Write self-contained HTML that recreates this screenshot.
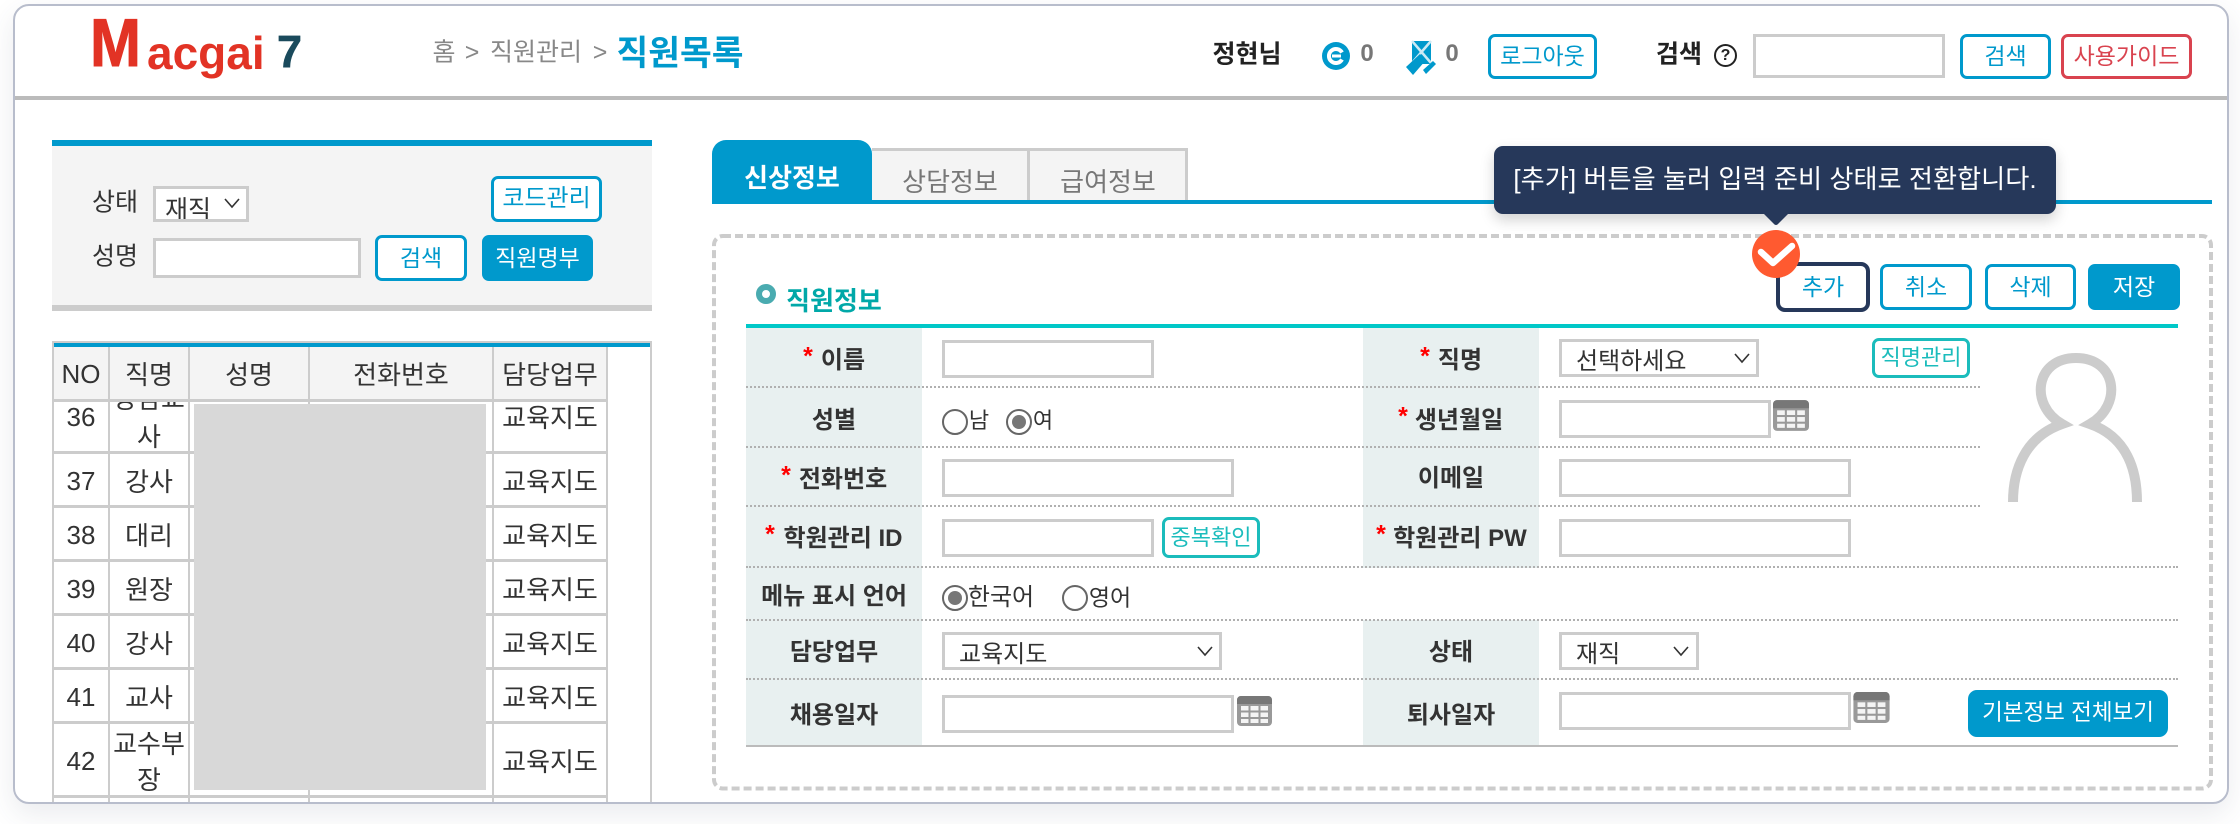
<!DOCTYPE html>
<html lang="ko"><head><meta charset="utf-8"><title>직원목록</title>
<style>
*{box-sizing:border-box;margin:0;padding:0}
html,body{width:2240px;height:824px;background:#fff;overflow:hidden;font-family:"Liberation Sans","Noto Sans CJK KR",sans-serif;color:#333}
.a{position:absolute}
.t{position:absolute;transform:translate(-50%,-50%);white-space:nowrap;line-height:1;margin-top:1px}
.l{font-size:24px;font-weight:700;color:#333}
.s{position:absolute;transform:translate(-50%,-50%);color:#f00;font:700 25px "Liberation Sans",sans-serif;line-height:1;margin-top:1px}
.b{font-size:26px;color:#333}
.i{position:absolute;border:3px solid #ccc;background:#fff;height:38px;display:block}
select.i{appearance:none;-webkit-appearance:none;font:24px "Liberation Sans","Noto Sans CJK KR",sans-serif;color:#333;padding:6px 0 0 14px;border-radius:0}
.btn{position:absolute;border:3px solid #0099cc;border-radius:7px;background:#fff;color:#0099cc;font-size:23px;display:flex;align-items:center;justify-content:center;white-space:nowrap;line-height:1}
.f{background:#0099cc;color:#fff}
.tl{border-color:#1bbcbc;color:#1bbcbc;font-size:22px}
.h{position:absolute;background:#ccc}
.d{position:absolute;height:0;border-top:2px dotted #b0b0b0}
.lb{position:absolute;background:#e8f0f0;width:176px}
.r{position:absolute;width:26px;height:26px;border-radius:50%;border:2px solid #666;background:#fff}
.r.on:after{content:"";position:absolute;left:4px;top:4px;width:14px;height:14px;border-radius:50%;background:#777}
#frame{position:absolute;left:13px;top:4px;width:2216px;height:800px;border:2px solid #b8bdcc;border-radius:16px;box-shadow:0 10px 28px rgba(60,70,100,.11)}
</style></head><body>

<!-- clipped page content inside the frame -->
<div class="a" style="left:0;top:0;width:2240px;height:802px;overflow:hidden">

<div class="a" style="left:14px;top:96px;width:2214px;height:4px;background:#bbb"></div>

<!-- logo -->
<div class="a" style="left:90px;top:4px;font:700 68px 'Liberation Sans',sans-serif;color:#e23325;transform:scaleX(.9);transform-origin:0 0;line-height:78px;-webkit-text-stroke:1px #e23325">M</div>
<div class="a" style="left:147px;top:27px;font:700 46px 'Liberation Sans',sans-serif;color:#e23325;line-height:52px">acgai</div>
<div class="a" style="left:277px;top:26px;font:700 45px 'Liberation Sans',sans-serif;color:#1a4a5c;line-height:52px;-webkit-text-stroke:.6px #1a4a5c">7</div>

<!-- breadcrumb -->
<div class="t" style="left:444px;top:52px;font-size:25px;color:#888">홈</div>
<div class="t" style="left:472px;top:52px;font-size:25px;color:#888">&gt;</div>
<div class="t" style="left:536px;top:52px;font-size:25px;color:#888">직원관리</div>
<div class="t" style="left:600px;top:52px;font-size:25px;color:#888">&gt;</div>
<div class="t" style="left:680px;top:53px;font-size:34.500px;font-weight:700;color:#0099cc">직원목록</div>

<!-- header right -->
<div class="t" style="left:1247px;top:54px;font-size:25px;font-weight:700;color:#222">정현님</div>
<svg class="a" style="left:1322px;top:42px" width="28" height="28" viewBox="0 0 28 28"><circle cx="14" cy="14" r="14" fill="#0099cc"/><path d="M20 10.500A7 7 0 1 0 20 17.500" fill="none" stroke="#fff" stroke-width="4"/><path d="M10 14h9" stroke="#fff" stroke-width="3"/></svg>
<div class="t" style="left:1367px;top:53px;font:700 24px 'Liberation Sans',sans-serif;color:#777">0</div>
<svg class="a" style="left:1406px;top:40px" width="30" height="36" viewBox="0 0 30 36"><path d="M6 1h19v23H6z" fill="#0099cc"/><path d="M6 1l19 22M25 1L6 23" stroke="#cdeaf5" stroke-width="2.500"/><path d="M0 27L14 14l6 6L7 35z" fill="#0099cc"/><path d="M17 30l10-9 3 3-10 10z" fill="#0099cc"/></svg>
<div class="t" style="left:1452px;top:53px;font:700 24px 'Liberation Sans',sans-serif;color:#777">0</div>
<div class="btn" style="left:1488px;top:34px;width:109px;height:45px">로그아웃</div>
<div class="t" style="left:1679px;top:54px;font-size:25px;font-weight:700;color:#222">검색</div>
<div class="a" style="left:1714px;top:44px;width:23px;height:23px;border:2px solid #222;border-radius:50%;font:700 16px/19px 'Liberation Sans',sans-serif;text-align:center;color:#222">?</div>
<div class="i" style="left:1753px;top:34px;width:192px;height:44px"></div>
<div class="btn" style="left:1960px;top:34px;width:91px;height:45px">검색</div>
<div class="btn" style="left:2061px;top:34px;width:131px;height:45px;border-color:#d9434f;color:#d9434f">사용가이드</div>

<!-- left search panel -->
<div class="a" style="left:52px;top:140px;width:600px;height:171px;background:#f4f4f4;border-top:6px solid #0099cc;border-bottom:6px solid #ccc"></div>
<div class="t" style="left:115px;top:202px;font-size:25px">상태</div>
<div class="i" style="left:153px;top:186px;width:96px;height:36px;overflow:hidden"><span class="a" style="left:9px;top:6px;font-size:25px;line-height:30px;white-space:nowrap">재직</span></div>
<svg class="a" style="left:224px;top:198px" width="16" height="11" viewBox="0 0 16 11"><path d="M1 1l7 8 7-8" fill="none" stroke="#333" stroke-width="1.600"/></svg>
<div class="btn" style="left:491px;top:176px;width:111px;height:46px;font-size:24px">코드관리</div>
<div class="t" style="left:115px;top:256px;font-size:25px">성명</div>
<div class="i" style="left:153px;top:238px;width:208px;height:40px"></div>
<div class="btn" style="left:375px;top:235px;width:92px;height:46px">검색</div>
<div class="btn f" style="left:482px;top:235px;width:111px;height:46px">직원명부</div>

<!-- left table -->
<div class="h" style="left:52px;top:341px;width:600px;height:6px;background:#0099cc;border-top:2px solid #ccc"></div>
<div class="a" style="left:54px;top:347px;width:554px;height:53px;background:#f4f4f4"></div>
<div class="h" style="left:52px;top:341px;width:2px;height:470px"></div>
<div class="h" style="left:650px;top:341px;width:2px;height:470px"></div>
<div class="h" style="left:108px;top:347px;width:2px;height:470px"></div>
<div class="h" style="left:188px;top:347px;width:2px;height:470px"></div>
<div class="h" style="left:308px;top:347px;width:2px;height:470px"></div>
<div class="h" style="left:492px;top:347px;width:2px;height:470px"></div>
<div class="h" style="left:606px;top:347px;width:2px;height:470px"></div>
<div class="h" style="left:54px;top:399px;width:554px;height:3px"></div>
<div class="h" style="left:54px;top:451px;width:554px;height:3px"></div>
<div class="h" style="left:54px;top:505px;width:554px;height:3px"></div>
<div class="h" style="left:54px;top:559px;width:554px;height:3px"></div>
<div class="h" style="left:54px;top:613px;width:554px;height:3px"></div>
<div class="h" style="left:54px;top:667px;width:554px;height:3px"></div>
<div class="h" style="left:54px;top:721px;width:554px;height:3px"></div>
<div class="h" style="left:54px;top:795px;width:554px;height:3px"></div>

<div class="t b" style="left:81px;top:373px">NO</div>
<div class="t b" style="left:149px;top:374px">직명</div>
<div class="t b" style="left:249px;top:374px">성명</div>
<div class="t b" style="left:401px;top:374px">전화번호</div>
<div class="t b" style="left:550px;top:374px">담당업무</div>

<div class="a" style="left:110px;top:402px;width:78px;height:49px;overflow:hidden"><span class="t b" style="left:39px;top:-4px">상담교</span><span class="t b" style="left:39px;top:34px">사</span></div>
<div class="t b" style="left:81px;top:416px">36</div><div class="t b" style="left:550px;top:417px">교육지도</div>
<div class="t b" style="left:81px;top:480px">37</div><div class="t b" style="left:149px;top:481px">강사</div><div class="t b" style="left:550px;top:481px">교육지도</div>
<div class="t b" style="left:81px;top:534px">38</div><div class="t b" style="left:149px;top:535px">대리</div><div class="t b" style="left:550px;top:535px">교육지도</div>
<div class="t b" style="left:81px;top:588px">39</div><div class="t b" style="left:149px;top:589px">원장</div><div class="t b" style="left:550px;top:589px">교육지도</div>
<div class="t b" style="left:81px;top:642px">40</div><div class="t b" style="left:149px;top:643px">강사</div><div class="t b" style="left:550px;top:643px">교육지도</div>
<div class="t b" style="left:81px;top:696px">41</div><div class="t b" style="left:149px;top:697px">교사</div><div class="t b" style="left:550px;top:697px">교육지도</div>
<div class="t b" style="left:81px;top:760px">42</div><div class="t b" style="left:149px;top:743px">교수부</div><div class="t b" style="left:149px;top:779px">장</div><div class="t b" style="left:550px;top:761px">교육지도</div>
<div class="a" style="left:194px;top:404px;width:292px;height:386px;background:#d8d8d8"></div>

<!-- tabs -->
<div class="a" style="left:712px;top:200px;width:1500px;height:4px;background:#0099cc"></div>
<div class="a" style="left:712px;top:140px;width:160px;height:64px;background:#0099cc;border-radius:14px 14px 0 0"></div>
<div class="t" style="left:792px;top:177px;font-size:26px;font-weight:700;color:#fff">신상정보</div>
<div class="a" style="left:872px;top:148px;width:158px;height:52px;background:#f4f4f4;border:3px solid #ccc;border-left:0;border-bottom:0"></div>
<div class="a" style="left:1030px;top:148px;width:158px;height:52px;background:#f4f4f4;border:3px solid #ccc;border-left:0;border-bottom:0"></div>
<div class="t" style="left:950px;top:181px;font-size:26px;color:#777">상담정보</div>
<div class="t" style="left:1108px;top:181px;font-size:26px;color:#777">급여정보</div>

<!-- dashed box -->
<svg class="a" style="left:710px;top:232px" width="1504" height="560" viewBox="710 232 1504 560"><rect x="714" y="236" width="1497" height="552.500" rx="9" fill="none" stroke="#ccc" stroke-width="4" stroke-dasharray="8 4"/></svg>

<div class="a" style="left:756px;top:284px;width:20px;height:20px;border-radius:50%;border:6px solid #4aabb0;background:#fff"></div>
<div class="t" style="left:834px;top:300px;font-size:26px;font-weight:700;color:#00a8a8">직원정보</div>

<!-- buttons -->
<div class="btn" style="left:1776px;top:262px;width:94px;height:50px;border:4px solid #26385a;border-radius:9px;padding-top:1px">추가</div>
<div class="btn" style="left:1880px;top:264px;width:92px;height:46px">취소</div>
<div class="btn" style="left:1985px;top:264px;width:91px;height:46px">삭제</div>
<div class="btn f" style="left:2088px;top:264px;width:92px;height:46px">저장</div>

<!-- form table -->
<div class="a" style="left:746px;top:324px;width:1432px;height:4px;background:#00c8c8"></div>
<div class="lb" style="left:746px;top:328px;height:417px"></div>
<div class="lb" style="left:1363px;top:328px;height:292px"></div>
<div class="lb" style="left:1363px;top:620px;height:125px"></div>
<div class="a" style="left:1363px;top:568px;width:176px;height:52px;background:#fff"></div>
<div class="d" style="left:746px;top:386px;width:1234px"></div>
<div class="d" style="left:746px;top:446px;width:1234px"></div>
<div class="d" style="left:746px;top:505px;width:1234px"></div>
<div class="d" style="left:746px;top:566px;width:1432px"></div>
<div class="d" style="left:746px;top:619px;width:1432px"></div>
<div class="d" style="left:746px;top:678px;width:1432px"></div>
<div class="a" style="left:746px;top:745px;width:1432px;height:2px;background:#bbb"></div>

<!-- labels col 1 -->
<div class="s" style="left:808px;top:356px">*</div><div class="t l" style="left:843px;top:360px">이름</div>
<div class="t l" style="left:834px;top:420px">성별</div>
<div class="s" style="left:786px;top:475px">*</div><div class="t l" style="left:843px;top:479px">전화번호</div>
<div class="s" style="left:770px;top:534px">*</div><div class="t l" style="left:843px;top:538px">학원관리 ID</div>
<div class="t l" style="left:834px;top:596px">메뉴 표시 언어</div>
<div class="t l" style="left:834px;top:652px">담당업무</div>
<div class="t l" style="left:834px;top:715px">채용일자</div>

<!-- labels col 3 -->
<div class="s" style="left:1425px;top:356px">*</div><div class="t l" style="left:1460px;top:360px">직명</div>
<div class="s" style="left:1403px;top:416px">*</div><div class="t l" style="left:1459px;top:420px">생년월일</div>
<div class="t l" style="left:1451px;top:478px">이메일</div>
<div class="s" style="left:1381px;top:534px">*</div><div class="t l" style="left:1460px;top:538px">학원관리 PW</div>
<div class="t l" style="left:1451px;top:652px">상태</div>
<div class="t l" style="left:1451px;top:715px">퇴사일자</div>

<!-- fields col 2 -->
<input class="i" style="left:942px;top:340px;width:212px">
<div class="r" style="left:942px;top:409px"></div><div class="t" style="left:979px;top:420px;font-size:22px">남</div>
<div class="r on" style="left:1006px;top:409px"></div><div class="t" style="left:1043px;top:420px;font-size:22px">여</div>
<input class="i" style="left:942px;top:459px;width:292px">
<input class="i" style="left:942px;top:519px;width:212px">
<div class="btn tl" style="left:1162px;top:517px;width:98px;height:41px">중복확인</div>
<div class="r on" style="left:942px;top:585px"></div><div class="t" style="left:1001px;top:597px;font-size:24px">한국어</div>
<div class="r" style="left:1062px;top:585px"></div><div class="t" style="left:1110px;top:597px;font-size:23px">영어</div>
<select class="i" style="left:942px;top:632px;width:280px"><option>교육지도</option></select>
<svg class="a" style="left:1197px;top:646px" width="16" height="11" viewBox="0 0 16 11"><path d="M1 1l7 8 7-8" fill="none" stroke="#333" stroke-width="1.600"/></svg>
<input class="i" style="left:942px;top:695px;width:292px">
<svg class="a" style="left:1237px;top:696px" width="35" height="30" viewBox="0 0 35 30"><rect width="35" height="30" rx="4" fill="#999"/><path d="M0 8V4a4 4 0 0 1 4-4h27a4 4 0 0 1 4 4v4z" fill="#777"/><g fill="#f4f4f4"><rect x="4" y="10" width="7.500" height="4.500"/><rect x="13.500" y="10" width="8" height="4.500"/><rect x="23.500" y="10" width="7.500" height="4.500"/><rect x="4" y="16.500" width="7.500" height="4.500"/><rect x="13.500" y="16.500" width="8" height="4.500"/><rect x="23.500" y="16.500" width="7.500" height="4.500"/><rect x="4" y="23" width="7.500" height="4"/><rect x="13.500" y="23" width="8" height="4"/><rect x="23.500" y="23" width="7.500" height="4"/></g></svg>

<!-- fields col 4 -->
<select class="i" style="left:1559px;top:339px;width:200px"><option>선택하세요</option></select>
<svg class="a" style="left:1734px;top:353px" width="16" height="11" viewBox="0 0 16 11"><path d="M1 1l7 8 7-8" fill="none" stroke="#333" stroke-width="1.600"/></svg>
<div class="btn tl" style="left:1872px;top:338px;width:98px;height:40px">직명관리</div>
<input class="i" style="left:1559px;top:400px;width:212px">
<svg class="a" style="left:1773px;top:400px" width="36" height="31" viewBox="0 0 35 30"><rect width="35" height="30" rx="4" fill="#999"/><path d="M0 8V4a4 4 0 0 1 4-4h27a4 4 0 0 1 4 4v4z" fill="#777"/><g fill="#f4f4f4"><rect x="4" y="10" width="7.500" height="4.500"/><rect x="13.500" y="10" width="8" height="4.500"/><rect x="23.500" y="10" width="7.500" height="4.500"/><rect x="4" y="16.500" width="7.500" height="4.500"/><rect x="13.500" y="16.500" width="8" height="4.500"/><rect x="23.500" y="16.500" width="7.500" height="4.500"/><rect x="4" y="23" width="7.500" height="4"/><rect x="13.500" y="23" width="8" height="4"/><rect x="23.500" y="23" width="7.500" height="4"/></g></svg>
<input class="i" style="left:1559px;top:459px;width:292px">
<input class="i" style="left:1559px;top:519px;width:292px">
<select class="i" style="left:1559px;top:632px;width:140px"><option>재직</option></select>
<svg class="a" style="left:1673px;top:646px" width="16" height="11" viewBox="0 0 16 11"><path d="M1 1l7 8 7-8" fill="none" stroke="#333" stroke-width="1.600"/></svg>
<input class="i" style="left:1559px;top:692px;width:292px">
<svg class="a" style="left:1853px;top:692px" width="37" height="31" viewBox="0 0 35 30"><rect width="35" height="30" rx="4" fill="#999"/><path d="M0 8V4a4 4 0 0 1 4-4h27a4 4 0 0 1 4 4v4z" fill="#777"/><g fill="#f4f4f4"><rect x="4" y="10" width="7.500" height="4.500"/><rect x="13.500" y="10" width="8" height="4.500"/><rect x="23.500" y="10" width="7.500" height="4.500"/><rect x="4" y="16.500" width="7.500" height="4.500"/><rect x="13.500" y="16.500" width="8" height="4.500"/><rect x="23.500" y="16.500" width="7.500" height="4.500"/><rect x="4" y="23" width="7.500" height="4"/><rect x="13.500" y="23" width="8" height="4"/><rect x="23.500" y="23" width="7.500" height="4"/></g></svg>
<div class="btn f" style="left:1968px;top:690px;width:200px;height:47px;border-radius:9px;font-size:22.500px">기본정보 전체보기</div>

<!-- person -->
<svg class="a" style="left:2000px;top:345px" width="150" height="160" viewBox="2000 345 150 160"><path d="M2013 502C2013 470 2025 437 2062 424C2029 405 2035 358 2076 358C2117 358 2123 405 2090 424C2127 437 2137 470 2137 502" fill="none" stroke="#ccc" stroke-width="10"/></svg>

<!-- tooltip -->
<div class="a" style="left:1494px;top:146px;width:562px;height:68px;background:#26385a;border-radius:9px;box-shadow:0 6px 14px rgba(0,0,0,.18);color:#fff;font-size:26.200px;line-height:67px;text-align:center;white-space:nowrap">[추가] 버튼을 눌러 입력 준비 상태로 전환합니다.</div>
<svg class="a" style="left:1764px;top:214px" width="24" height="11" viewBox="0 0 24 11"><path d="M0 0h24L14 10a2.500 2.500 0 0 1-4 0z" fill="#26385a"/></svg>

<!-- check badge -->
<svg class="a" style="left:1752px;top:230px" width="48" height="48" viewBox="0 0 48 48"><circle cx="24" cy="24" r="24" fill="#ff5a30"/><path d="M9 22l12 11 19-17" fill="none" stroke="#fff" stroke-width="6.500" stroke-linecap="round" stroke-linejoin="round"/></svg>
</div>

<div id="frame"></div>
</body></html>
